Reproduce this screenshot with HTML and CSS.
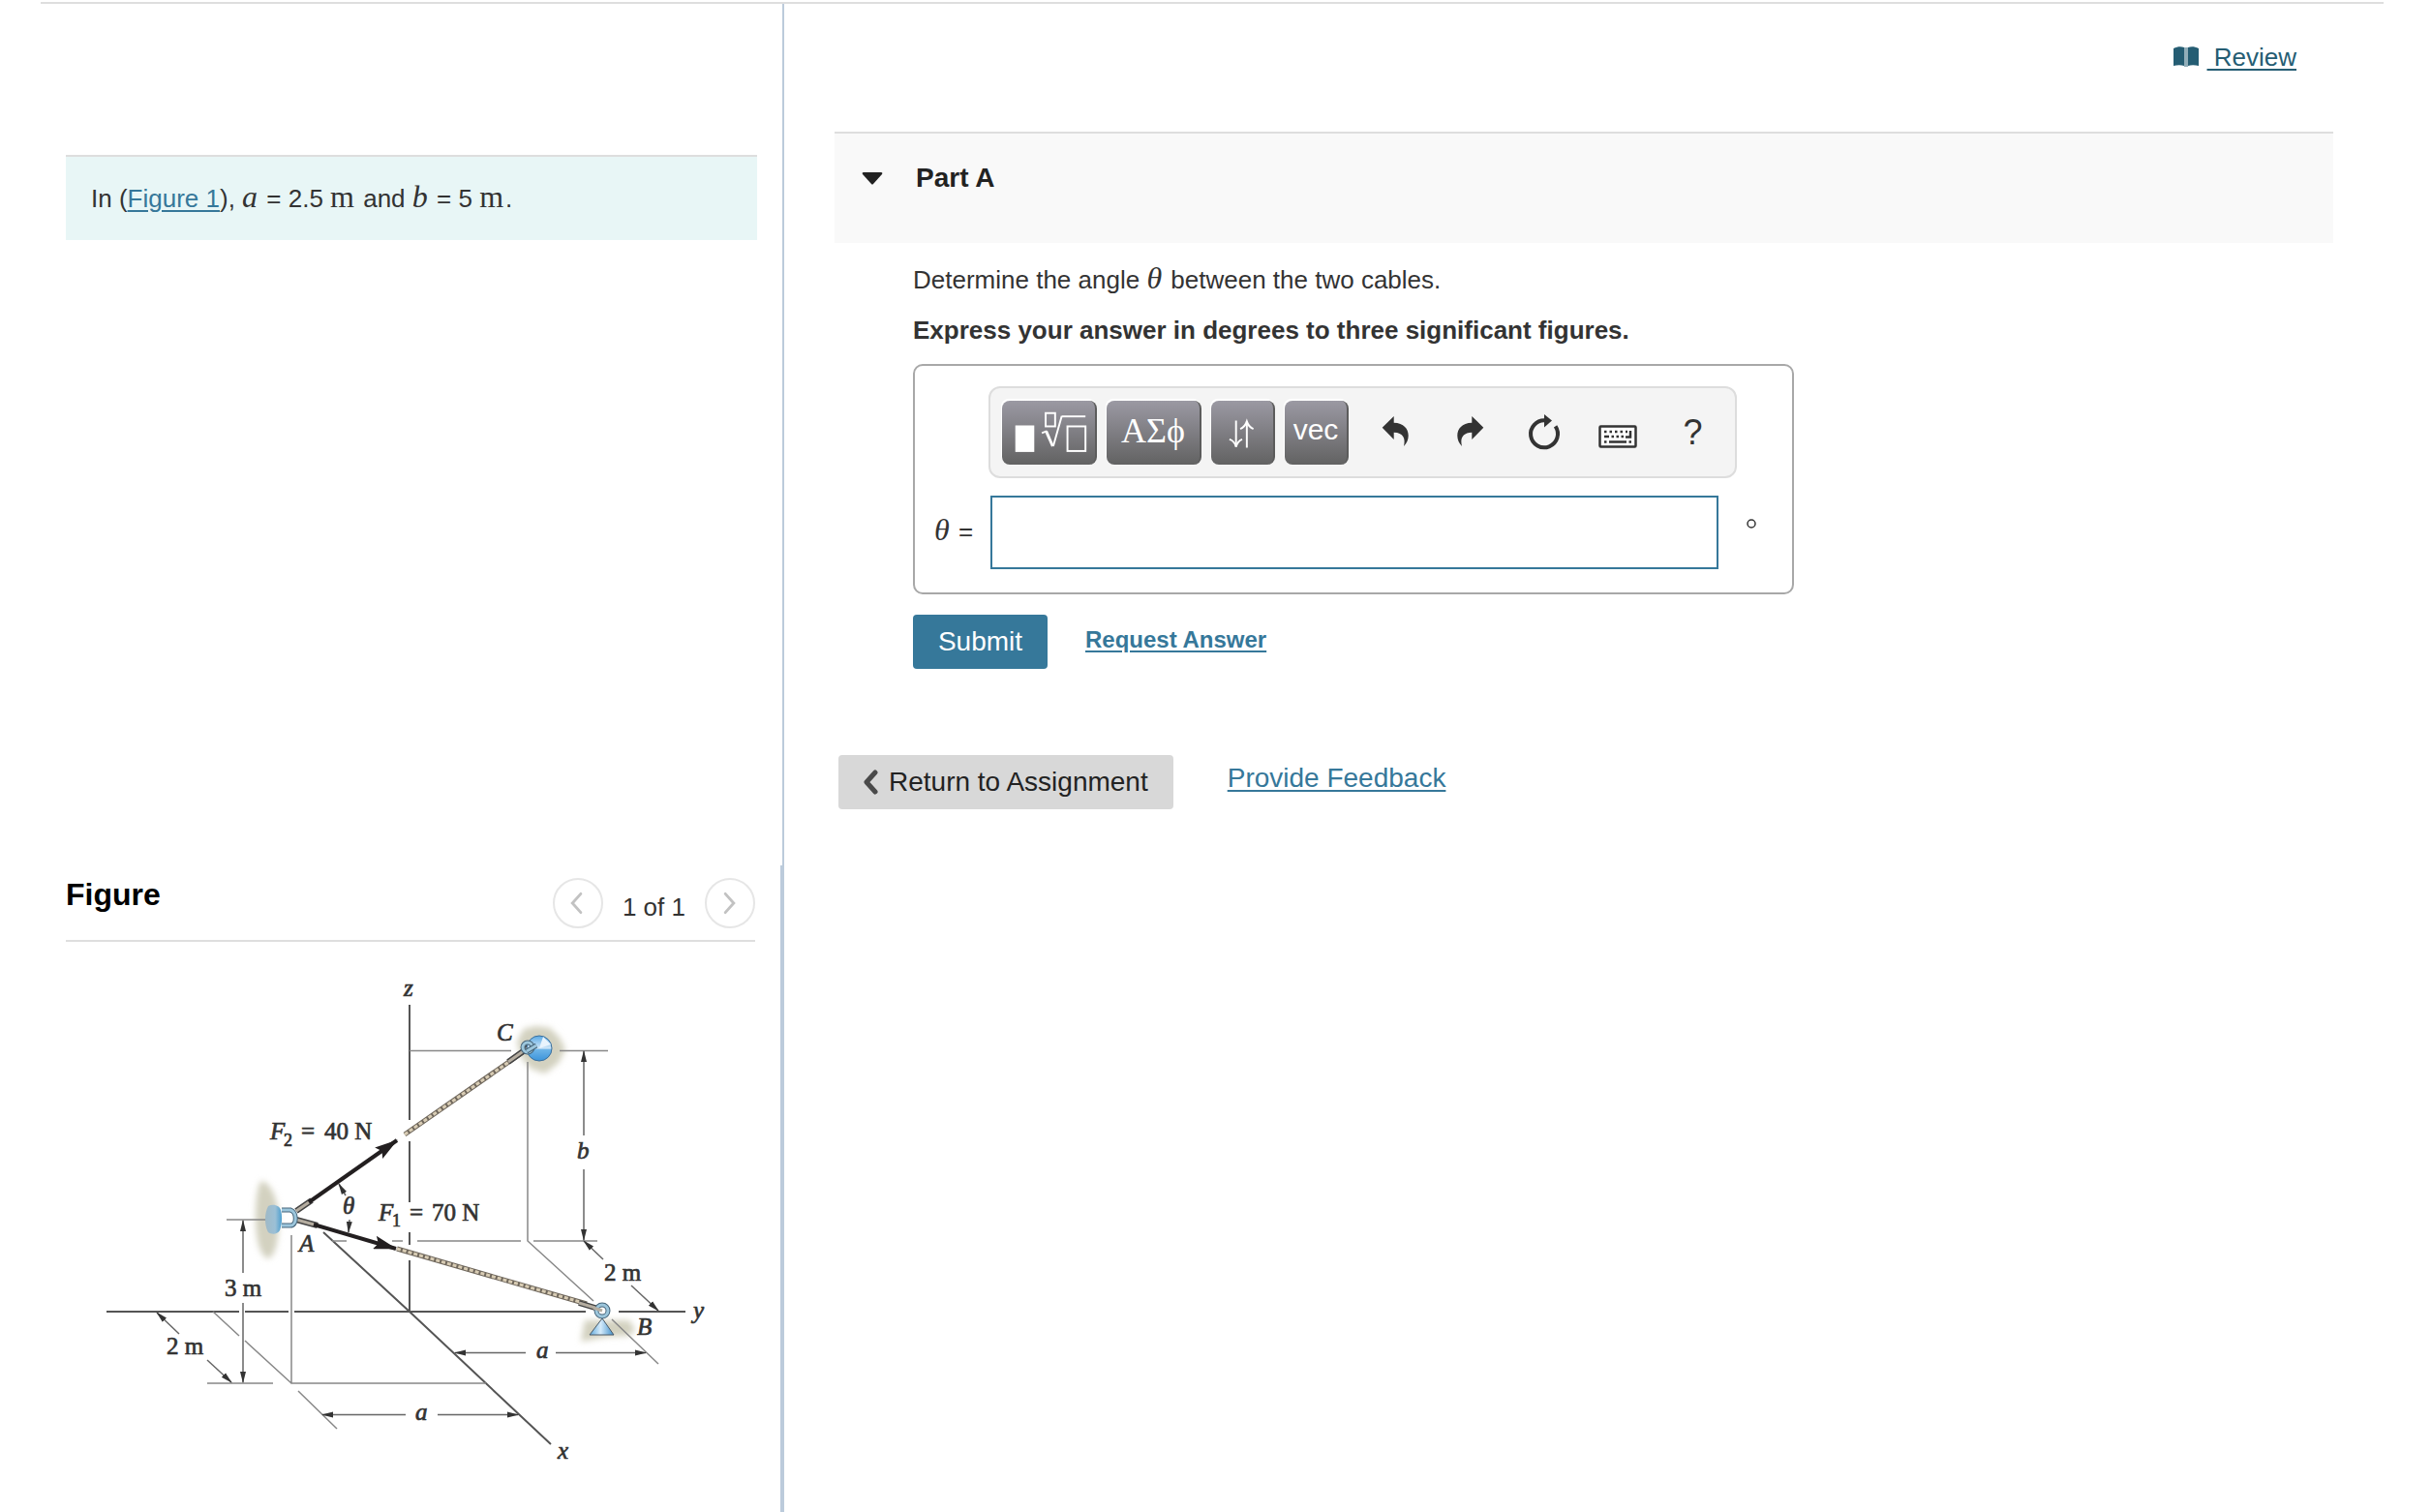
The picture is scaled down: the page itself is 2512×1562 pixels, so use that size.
FILE: index.html
```html
<!DOCTYPE html>
<html lang="en">
<head>
<meta charset="utf-8">
<meta name="viewport" content="width=device-width, initial-scale=1">
<title>Part A</title>
<link rel="stylesheet" href="styles.css">
</head>
<body>
<div class="page">
  <div class="left">
    <section class="problem">
      <p class="intro">In (<a href="#figure">Figure 1</a>), <i class="math">a</i> = 2.5 <span class="math">m</span> and <i class="math">b</i> = 5 <span class="math">m</span>.</p>
    </section>
    <section class="figure" id="figure">
      <header class="figure-head">
        <h2>Figure</h2>
        <nav class="pager" aria-label="Figures">
          <button type="button" class="round" aria-label="Previous figure"><svg viewBox="0 0 50 50"><path d="M28 15 L19 25 L28 35"/></svg></button>
          <span>1 of 1</span>
          <button type="button" class="round" aria-label="Next figure"><svg viewBox="0 0 50 50"><path d="M20 15 L29 25 L20 35"/></svg></button>
        </nav>
      </header>
      <svg class="diagram" viewBox="68 973 712 560" role="img" aria-label="Two cables from A to B and C">
        <defs>
          <marker id="tip" viewBox="0 0 12 8" refX="11" refY="4" markerWidth="12" markerHeight="8" markerUnits="userSpaceOnUse" orient="auto-start-reverse"><path d="M0 1 L12 4 L0 7 Z" fill="#333"/></marker>
          <marker id="force" viewBox="0 0 24 14" refX="23" refY="7" markerWidth="24" markerHeight="14" markerUnits="userSpaceOnUse" orient="auto"><path d="M0 0 L24 7 L0 14 L4 7 Z" fill="#231f20"/></marker>
          <filter id="soft" x="-30%" y="-30%" width="160%" height="160%"><feGaussianBlur stdDeviation="3"/></filter>
          <linearGradient id="disc"><stop offset="0" stop-color="#9fb9c6"/><stop offset=".6" stop-color="#9cc0d6"/><stop offset="1" stop-color="#4d9fcf"/></linearGradient>
          <linearGradient id="cone"><stop offset="0" stop-color="#5fa9dc"/><stop offset=".45" stop-color="#d6ecfb"/><stop offset="1" stop-color="#3f8fcb"/></linearGradient>
          <linearGradient id="ball" x2="0" y2="1"><stop offset="0" stop-color="#5aa9e4"/><stop offset=".5" stop-color="#cfe6f8"/><stop offset=".55" stop-color="#6db4e8"/><stop offset="1" stop-color="#3c94da"/></linearGradient>
        </defs>
        <g class="halo" filter="url(#soft)">
          <path d="M270 1220 C281 1222 288 1243 288 1260 C288 1282 284 1300 276 1300 C268 1296 264 1280 264 1258 C264 1240 266 1224 270 1220Z"/>
          <path d="M541 1063 L554 1060 L568 1062 L578 1072 L584 1084 L577 1098 L563 1109 L548 1104 L538 1092 L534 1076Z"/>
          <path d="M604 1364 L650 1364 L656 1374 L650 1380 L626 1381 L600 1386Z"/>
        </g>
        <g class="axis">
          <path d="M423 1038V1157M423 1179V1242M423 1273V1286M423 1302V1355"/>
          <path d="M110 1355H247M253 1355H298M304 1355H605M639 1355H708"/>
          <path d="M334 1273L423 1355L569 1492"/>
        </g>
        <g class="thin">
          <path d="M423 1085.500H528M578 1085.500H628M545 1097V1282L613 1344"/>
          <path d="M343 1282H358M405 1282H416M431 1282H538M551 1282H617"/>
          <path d="M234 1260H278M301 1276V1429H502M220 1355L247 1380M253 1385L301 1429M214 1429H282"/>
          <path d="M308 1437L348 1476M632 1363L680 1409"/>
        </g>
        <g class="dim">
          <path d="M603 1173V1086"/><path d="M603 1208V1281"/>
          <path d="M623 1301L603 1282"/><path d="M652 1328L680 1354"/>
          <path d="M543 1397.500H470"/><path d="M574 1397.500H667"/>
          <path d="M419 1461.500H333"/><path d="M452 1461.500H535"/>
          <path d="M185 1378L162 1356"/><path d="M214 1405L239 1428"/>
          <path d="M251 1315V1261"/><path d="M251 1346V1428"/>
          <path d="M357 1235L350 1223"/><path d="M361 1260L360 1273"/>
        </g>
        <path class="rope-edge" d="M418 1172L540 1087M410 1290L606 1347"/>
        <path class="rope" d="M418 1172L540 1087M410 1290L606 1347"/>
        <path class="cuff" d="M306 1251L322 1240M306 1260L328 1266M525 1097L546 1082M598 1346L618 1352"/>
        <path class="cuff-core" d="M306 1251L322 1240M306 1260L328 1266M525 1097L546 1082M598 1346L618 1352"/>
        <g class="force"><path d="M319 1242L410 1178"/><path d="M324 1265L409 1290"/></g>
        <path d="M277 1246 C283 1243 289 1246 290 1250 C292 1257 291 1266 289 1271 C286 1276 280 1275 277 1273 C273 1266 273 1253 277 1246Z" fill="url(#disc)"/>
        <path class="ring-edge" d="M291 1250H300C307 1252 307 1266 300 1266H291"/>
        <path class="ring" d="M291 1250H300C307 1252 307 1266 300 1266H291"/>
        <circle cx="557" cy="1083" r="13" fill="url(#ball)" stroke="#3a6f9c"/>
        <path d="M557 1083L561 1071L569 1079Z" fill="#e9f4fd"/>
        <circle class="ring-edge" cx="545" cy="1082" r="5"/><circle class="ring" cx="545" cy="1082" r="5"/>
        <path class="ring-edge" d="M544 1086L554 1080"/><path class="ring" d="M544 1086L554 1080"/>
        <path d="M622 1362L634 1379L609 1379Z" fill="url(#cone)" stroke="#4a5a68"/>
        <circle class="ring-edge" cx="622" cy="1354" r="6"/><circle class="ring" cx="622" cy="1354" r="6"/>
        <path d="M613 1351L622 1354" class="cuff-core"/>
        <g class="labels">
          <text class="var" x="417" y="1029">z</text>
          <text class="var" x="513" y="1075">C</text>
          <text class="var" x="596" y="1197">b</text>
          <text class="var" x="279" y="1177">F</text><text class="sub" x="293" y="1184">2</text><text x="311" y="1177">=</text><text x="335" y="1177">40 N</text>
          <text class="var" x="391" y="1261">F</text><text class="sub" x="405" y="1267">1</text><text x="423" y="1261">=</text><text x="446" y="1261">70 N</text>
          <text class="var" x="354" y="1254">θ</text>
          <text class="var" x="309" y="1293">A</text>
          <text x="232" y="1339">3 m</text>
          <text x="172" y="1399">2 m</text>
          <text x="624" y="1323">2 m</text>
          <text class="var" x="716" y="1362">y</text>
          <text class="var" x="658" y="1379">B</text>
          <text class="var" x="554" y="1403">a</text>
          <text class="var" x="429" y="1467">a</text>
          <text class="var" x="576" y="1507">x</text>
        </g>
      </svg>
    </section>
  </div>

  <main class="right">
    <div class="review">
      <svg class="book" viewBox="0 0 26 22"><path d="M0 2C4 0 8 0 11 1V20C8 19 4 19 0 20Z"/><path d="M26 2C22 0 18 0 15 1V20C18 19 22 19 26 20Z"/><path d="M11 1H15V21H11Z" opacity=".5"/></svg>
      <a href="#review">&nbsp;Review</a>
    </div>
    <header class="part-head">
      <svg class="caret" viewBox="0 0 22 13"><path d="M2 0H20Q22 0 21 2L12 12Q11 13 10 12L1 2Q0 0 2 0Z"/></svg>
      <h1>Part A</h1>
    </header>
    <form class="part-body">
      <p>Determine the angle <i class="math">θ</i> between the two cables.</p>
      <p class="strong">Express your answer in degrees to three significant figures.</p>
      <div class="answer">
        <div class="toolbar" role="toolbar" aria-label="Equation tools">
          <button type="button" class="key wide" aria-label="Templates"><svg viewBox="0 0 98 66"><rect x="14" y="25" width="20" height="28" fill="#fff"/><g fill="none" stroke="#fff" stroke-width="2"><rect x="46" y="12" width="10" height="14"/><rect x="69" y="26" width="19" height="26"/><path d="M63 15.500H88"/><path d="M42 33L47 31M54 47L63 15"/><path d="M46.500 31L53.500 47" stroke-width="3"/></g></svg></button>
          <button type="button" class="key wide greek">ΑΣϕ</button>
          <button type="button" class="key" aria-label="Arrows"><svg viewBox="0 0 66 66"><g fill="none" stroke="#fff" stroke-width="2"><path d="M26.500 20V48M38 49V21"/><path d="M19.500 40Q25 42 26.500 48Q28 42 33 40M31 29Q36 27 38 21Q40 27 45 29"/></g></svg></button>
          <button type="button" class="key vec">vec</button>
          <div class="tools">
            <button type="button" class="tool" aria-label="Undo"><svg viewBox="0 0 67 66"><path d="M20.700 27.700L32.700 16V22.700C43 23 47.700 29 47.700 36C47.700 40 46 44 43 47C45 39 42.500 33 32.700 32.700V40Z"/></svg></button>
            <button type="button" class="tool" aria-label="Redo"><svg viewBox="0 0 67 66"><path d="M48.300 27.700L36.300 16V22.700C26 23 21.300 29 21.300 36C21.300 40 23 44 26 47C24 39 26.500 33 36.300 32.700V40Z"/></svg></button>
            <button type="button" class="tool" aria-label="Reset"><svg viewBox="0 0 67 66"><path d="M34 14L42 20.500L34 27.500Z"/><path d="M35 20.300A14 14 0 1 0 45.600 26.400" fill="none" stroke="#333" stroke-width="4"/></svg></button>
            <button type="button" class="tool" aria-label="Keyboard"><svg viewBox="0 0 67 66"><rect x="14.500" y="26.500" width="37" height="21" rx="1" fill="#fff" stroke="#333" stroke-width="2.500"/><path d="M19 32H43M19 42.500H22M44.500 42.500H47" fill="none" stroke="#333" stroke-width="2.500" stroke-dasharray="2.500 3"/><path d="M19 37H24M26.500 37H29M31.500 37H34M36.500 37H39M41 37.500H46V31M24 42.500H42" fill="none" stroke="#333" stroke-width="2.500"/></svg></button>
            <button type="button" class="tool" aria-label="Help">?</button>
          </div>
        </div>
        <label class="lhs" for="theta"><i class="math">θ</i> =</label>
        <input class="field" id="theta" type="text">
        <svg class="degree" viewBox="0 0 10 10" role="img" aria-label="degrees"><circle cx="5" cy="5" r="4"/></svg>
      </div>
      <div class="actions">
        <button type="submit" class="submit">Submit</button>
        <a class="request" href="#request">Request Answer</a>
      </div>
    </form>
    <div class="bottom">
      <button type="button" class="return"><svg viewBox="0 0 18 26"><path d="M14 3L5 13L14 23"/></svg>Return to Assignment</button>
      <a class="feedback" href="#feedback">Provide Feedback</a>
    </div>
  </main>
</div>
</body>
</html>
```
FILE: styles.css
```css
* { box-sizing: border-box; }

body {
  margin: 0;
  background: #fff;
  color: #333;
  font: 26px/34px "Liberation Sans", Arial, sans-serif;
}

p, h1, h2 { margin: 0; }

a {
  color: #36789a;
  text-decoration-thickness: 2px;
  text-underline-offset: 3px;
}

button {
  padding: 0;
  border: 0;
  background: none;
  color: inherit;
  font: inherit;
  cursor: pointer;
}

svg { display: block; }

.math {
  margin-right: 2px;
  font-family: "Liberation Serif", "Times New Roman", serif;
  font-size: 32px;
  line-height: 30px;
}

.page {
  display: grid;
  grid-template-columns: clamp(560px, 33vw, 768px) minmax(0, 1fr);
  min-height: calc(100vh - 2px);
  margin: 2px 50px 0 42px;
  border-top: 2px solid #dedede;
}

/* Left column */
.left {
  display: grid;
  grid-template-rows: 4fr 3fr;
}

.problem {
  padding: 156px 26px 0;
  border-right: 2px solid #bccbdb;
}

.intro {
  padding: 26px;
  border-top: 2px solid #dedede;
  background: #e8f6f6;
}

.figure {
  padding: 0 26px;
  border-right: 4px solid #bccbdb;
}

.figure-head {
  display: flex;
  justify-content: space-between;
  align-items: flex-start;
  padding: 13px 0 12px;
  border-bottom: 2px solid #dedede;
}

.figure-head h2 {
  color: #000;
  font-size: 32px;
  line-height: 34px;
}

.pager {
  display: flex;
  align-items: center;
  gap: 20px;
}

.pager span { padding-top: 7px; }

.round {
  width: 52px;
  height: 52px;
  border: 2px solid #e6e6e6;
  border-radius: 50%;
}

.round path {
  fill: none;
  stroke: #c2c2c2;
  stroke-width: 3;
  stroke-linecap: round;
}

/* Diagram */
.diagram { width: 100%; }
.halo { fill: #d3d1c0; }
.axis { fill: none; stroke: #555; stroke-width: 2; }
.thin { fill: none; stroke: #888; stroke-width: 1.5; }
.dim { fill: none; stroke: #666; stroke-width: 1.5; }
.dim path { marker-end: url(#tip); }
.rope-edge { stroke: #6f675c; stroke-width: 5; }
.rope { stroke: #d8ccb4; stroke-width: 3; stroke-dasharray: 4 2; }
.cuff { fill: none; stroke: #444; stroke-width: 6; }
.cuff-core { fill: none; stroke: #b5ada0; stroke-width: 3; }
.force { stroke: #231f20; stroke-width: 4; }
.force path { marker-end: url(#force); }
.ring-edge { fill: none; stroke: #47657a; stroke-width: 5; }
.ring { fill: none; stroke: #9cc6dc; stroke-width: 3; }

.labels {
  fill: #333;
  stroke: #333;
  stroke-width: 0.7px;
  font-family: "Liberation Serif", "Times New Roman", serif;
  font-size: 25px;
}

.labels .var { font-style: italic; }
.labels .sub { font-size: 18px; }

/* Right column */
.right { padding: 0 52px; }

.review {
  display: flex;
  justify-content: flex-end;
  align-items: flex-start;
  gap: 9px;
  padding: 38px 38px 60px;
}

.review a { color: #255d73; }

.book {
  width: 26px;
  height: 22px;
  margin-top: 6px;
  fill: #255d73;
}

.part-head {
  display: flex;
  gap: 34px;
  padding: 28px 28px 49px;
  border-top: 2px solid #dedede;
  background: #f9f9f9;
}

.part-head h1 {
  color: #222;
  font-size: 28px;
  line-height: 36px;
}

.caret {
  width: 22px;
  height: 13px;
  margin-top: 12px;
  fill: #222;
}

.part-body {
  display: flex;
  flex-direction: column;
  gap: 18px;
  margin: 21px 0 0 81px;
}

.strong { font-weight: bold; }

.answer {
  display: grid;
  grid-template-columns: 54px minmax(0, 752px) 10px;
  column-gap: 2px;
  row-gap: 18px;
  align-items: center;
  max-width: 910px;
  padding: 21px 22px 24px;
  border: 2px solid #a8a8a8;
  border-radius: 10px;
}

.toolbar {
  display: flex;
  grid-column: 2 / 4;
  gap: 10px;
  width: 773px;
  margin-left: -2px;
  padding: 13px 8px 12px 12px;
  border: 2px solid #ddd;
  border-radius: 12px;
  background: #f4f4f4;
}

.key {
  width: 66px;
  height: 66px;
  border-right: 2px solid #5c5c5c;
  border-radius: 8px;
  background: linear-gradient(#9b99a3, #626262);
  box-shadow: -1px -2px 0 #fff;
  color: #fff;
}

.wide { width: 98px; }

.greek {
  padding-bottom: 4px;
  font-family: "Liberation Serif", "Times New Roman", serif;
  font-size: 36px;
}

.vec {
  padding-bottom: 6px;
  font-size: 30px;
}

.tools {
  display: flex;
  gap: 10px;
  margin-left: 4px;
}

.tool {
  width: 67px;
  height: 66px;
  fill: #333;
  font-size: 36px;
}

.lhs {
  padding-bottom: 2px;
  margin-left: -2px;
  white-space: nowrap;
}

.field {
  width: 100%;
  height: 76px;
  padding: 0 12px;
  border: 2px solid #36789a;
  background: #fff;
  color: #333;
  font: inherit;
}

.degree {
  width: 10px;
  height: 10px;
  margin: 0 0 18px 27px;
  fill: none;
  stroke: #333;
  stroke-width: 1.5;
}

.actions {
  display: flex;
  align-items: flex-start;
  gap: 39px;
  padding-top: 3px;
}

.submit {
  width: 139px;
  height: 56px;
  border-radius: 4px;
  background: #36789a;
  color: #fff;
  font-size: 28px;
}

.request {
  font-size: 24px;
  font-weight: bold;
  line-height: 52px;
}

.bottom {
  display: flex;
  gap: 56px;
  margin: 89px 4px 0;
  font-size: 28px;
}

.return {
  display: flex;
  align-items: center;
  gap: 10px;
  height: 56px;
  padding: 0 26px 0 24px;
  border-radius: 4px;
  background: #d8d8d8;
  color: #222;
}

.return svg {
  width: 18px;
  height: 26px;
  fill: none;
  stroke: #4a4a4a;
  stroke-width: 5;
  stroke-linecap: round;
  stroke-linejoin: round;
}

.feedback { line-height: 48px; }
```
